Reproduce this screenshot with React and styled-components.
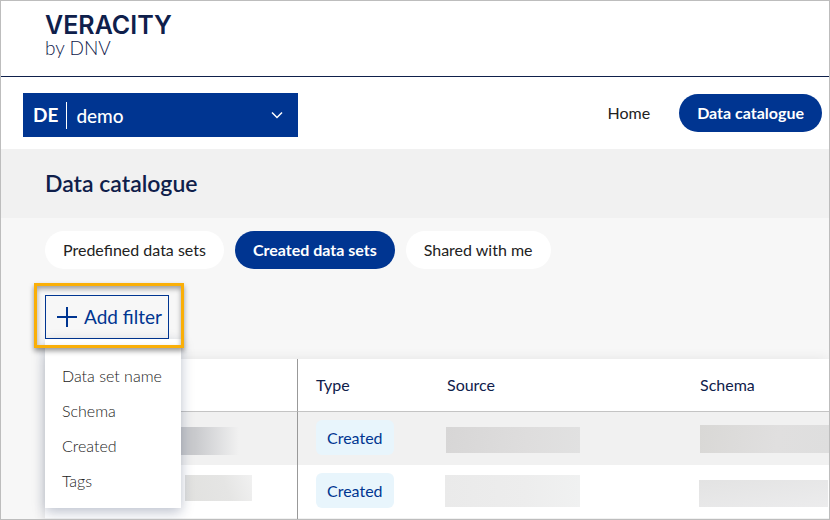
import React from "react";
import styled, { createGlobalStyle } from "styled-components";

const navy = "#0f204b";
const blue = "#003591";

const GlobalStyle = createGlobalStyle`
  * { box-sizing: border-box; }
  body {
    margin: 0;
    font-family: Lato, "Open Sans", sans-serif;
    font-size: 16px;
    line-height: 20px;
    color: #222;
  }
  button { font: inherit; cursor: pointer; }
`;

const Page = styled.div`
  display: flex;
  flex-direction: column;
  height: 100vh;
  overflow: hidden;
  border: 1px solid #bdbdbd;
  background: #f7f7f7;
`;

const Header = styled.header`
  flex: none;
  height: 76px;
  padding: 12px 44px;
  background: #fff;
  border-bottom: 1px solid ${navy};
`;

const Brand = styled.a`
  display: inline-flex;
  flex-direction: column;
  color: ${navy};
  text-decoration: none;
`;

const BrandName = styled.span`
  font: 600 25px/24px Inter, sans-serif;
`;

const BrandOwner = styled.span`
  font: 300 19px/21px Lato, sans-serif;
`;

const TopBar = styled.div`
  flex: none;
  display: flex;
  align-items: flex-end;
  justify-content: space-between;
  height: 72px;
  padding: 0 7px 12px 22px;
  background: #fff;
`;

const Workspace = styled.button`
  display: flex;
  align-items: center;
  width: 275px;
  height: 44px;
  padding: 0 13px 0 10px;
  border: 0;
  background: ${blue};
  color: #fff;
  font-size: 19px;
  line-height: 24px;
`;

const Initials = styled.span`
  padding-right: 8px;
  font-weight: 700;
`;

const WorkspaceName = styled.span`
  flex: 1;
  padding-left: 9px;
  border-left: 1px solid #fff;
  line-height: 27px;
  text-align: left;
  font-weight: 500;
`;

const PillGroup = styled.nav`
  display: flex;
  align-items: center;
  gap: 11px;
`;

const MainNav = styled(PillGroup)`
  height: 44px;
  padding-bottom: 4px;
`;

const Pill = styled.a`
  display: flex;
  align-items: center;
  justify-content: center;
  height: 38px;
  padding: 0 18px;
  border-radius: 19px;
  background: ${(p) => (p.$active ? blue : "#fff")};
  color: ${(p) => (p.$active ? "#fff" : "#222")};
  font-weight: ${(p) => (p.$active ? 700 : 400)};
  text-decoration: none;
  white-space: nowrap;
`;

const TitleBand = styled.div`
  flex: none;
  display: flex;
  align-items: center;
  height: 69px;
  padding: 0 44px 2px;
  background: #f1f1f1;
`;

const Title = styled.h1`
  margin: 0;
  color: ${navy};
  font-size: 23px;
  line-height: 28px;
  font-weight: 600;
`;

const Content = styled.main`
  flex: none;
  padding: 13px 0 0 44px;
`;

const FilterArea = styled.div`
  position: relative;
  width: fit-content;
  margin: 26px 0 20px;
`;

const Highlight = styled.div`
  position: absolute;
  z-index: 2;
  inset: -12px -15px -9px -11px;
  border: 3px solid #faaf08;
  box-shadow: 0 3px 5px rgba(0, 0, 0, 0.4), inset 0 3px 5px rgba(0, 0, 0, 0.35);
  pointer-events: none;
`;

const AddFilter = styled.button`
  display: flex;
  align-items: center;
  gap: 7px;
  height: 44px;
  padding: 0 6px 0 11px;
  border: 1px solid ${blue};
  background: transparent;
  color: ${blue};
  font-size: 19px;
  line-height: 24px;
`;

const Menu = styled.ul`
  position: absolute;
  z-index: 1;
  top: 44px;
  left: 0;
  width: 136px;
  margin: 0;
  padding: 19px 0 10px;
  list-style: none;
  background: #fff;
  box-shadow: 0 4px 12px rgba(15, 32, 75, 0.28);
`;

const MenuItem = styled.button`
  display: block;
  width: 100%;
  height: 35px;
  padding: 0 0 0 17px;
  border: 0;
  background: transparent;
  color: #222;
  font-weight: 300;
  text-align: left;
  white-space: nowrap;
`;

const Table = styled.table`
  width: 100%;
  table-layout: fixed;
  border-spacing: 0;
  background: #fff;
  box-shadow: 0 0 12px rgba(0, 0, 0, 0.08);
`;

const Col = styled.col`
  width: ${(p) => p.$width};
`;

const HeadCell = styled.th`
  height: 53px;
  padding: 0 0 0 18px;
  border-bottom: 1px solid #c4c4c4;
  color: ${navy};
  font-weight: 400;
  text-align: left;
  &:first-child { border-right: 1px solid #999; }
`;

const Row = styled.tr`
  background: ${(p) => (p.$shaded ? "#f1f1f1" : "#fff")};
`;

const Cell = styled.td`
  height: 53px;
  padding: 0 0 0 18px;
  vertical-align: top;
  &:first-child { border-right: 1px solid #999; }
`;

const Tag = styled.span`
  display: inline-flex;
  align-items: center;
  height: 35px;
  margin-top: 8px;
  padding: 0 11px;
  border-radius: 6px;
  background: #e8f5fc;
  color: ${blue};
`;

const Redacted = styled.div`
  width: ${(p) => p.$width};
  height: ${(p) => p.$height};
  margin: ${(p) => p.$margin};
  background: linear-gradient(${(p) => p.$fill});
`;

const rows = [
  {
    name: { $width: "58px", $height: "28px", $margin: "15px 0 0 118px", $fill: "90deg, #c9cacd 25%, #f1f1f1" },
    source: { $width: "134px", $height: "26px", $margin: "15px 0 0 -1px", $fill: "100deg, #d7d6d6, #dedddd 60%, #e1e1e1" },
    schema: { $width: "100%", $height: "28px", $margin: "13px 0 0 0", $fill: "100deg, #d9d8d6, #e0dfdf 60%, #dedede" },
  },
  {
    name: { $width: "67px", $height: "26px", $margin: "10px 0 0 122px", $fill: "70deg, #e1e1df, #e5e5e4 60%, #f1f1f1" },
    source: { $width: "135px", $height: "32px", $margin: "10px 0 0 -2px", $fill: "90deg, #eaeaea, #ededed 60%, #f0f1f1" },
    schema: { $width: "100%", $height: "27px", $margin: "15px 0 0 -1px", $fill: "170deg, #e3e3e3, #ececed" },
  },
];

const filters = ["Data set name", "Schema", "Created", "Tags"];

export default function App() {
  return (
    <Page>
      <GlobalStyle />
      <Header>
        <Brand href="#">
          <BrandName>VERACITY</BrandName>
          <BrandOwner>by DNV</BrandOwner>
        </Brand>
      </Header>
      <TopBar>
        <Workspace type="button" aria-haspopup="listbox">
          <Initials>DE</Initials>
          <WorkspaceName>demo</WorkspaceName>
          <svg width="16" height="16" viewBox="0 0 16 16" fill="none" stroke="#fff" strokeWidth="1.5" aria-hidden="true">
            <path d="M3 5.5 8 10.5 13 5.5" />
          </svg>
        </Workspace>
        <MainNav aria-label="Main">
          <Pill href="#home">Home</Pill>
          <Pill href="#catalogue" $active>Data catalogue</Pill>
        </MainNav>
      </TopBar>
      <TitleBand>
        <Title>Data catalogue</Title>
      </TitleBand>
      <Content>
        <PillGroup aria-label="Data sets">
          <Pill href="#predefined">Predefined data sets</Pill>
          <Pill href="#created" $active>Created data sets</Pill>
          <Pill href="#shared">Shared with me</Pill>
        </PillGroup>
        <FilterArea>
          <AddFilter type="button" aria-haspopup="menu" aria-expanded="true">
            <svg width="20" height="20" viewBox="0 0 20 20" fill="none" stroke="currentColor" strokeWidth="2" aria-hidden="true">
              <path d="M10 0V20M0 10H20" />
            </svg>
            Add filter
          </AddFilter>
          <Highlight />
          <Menu>
            {filters.map((name) => (
              <li key={name}>
                <MenuItem type="button">{name}</MenuItem>
              </li>
            ))}
          </Menu>
        </FilterArea>
        <Table>
          <colgroup>
            <Col $width="253px" />
            <Col $width="131px" />
            <Col $width="253px" />
            <Col />
          </colgroup>
          <thead>
            <tr>
              <HeadCell />
              <HeadCell scope="col">Type</HeadCell>
              <HeadCell scope="col">Source</HeadCell>
              <HeadCell scope="col">Schema</HeadCell>
            </tr>
          </thead>
          <tbody>
            {rows.map((row, i) => (
              <Row key={i} $shaded={i % 2 === 0}>
                <Cell><Redacted {...row.name} /></Cell>
                <Cell><Tag>Created</Tag></Cell>
                <Cell><Redacted {...row.source} /></Cell>
                <Cell><Redacted {...row.schema} /></Cell>
              </Row>
            ))}
            <Row $shaded>
              <Cell /><Cell /><Cell /><Cell />
            </Row>
          </tbody>
        </Table>
      </Content>
    </Page>
  );
}
